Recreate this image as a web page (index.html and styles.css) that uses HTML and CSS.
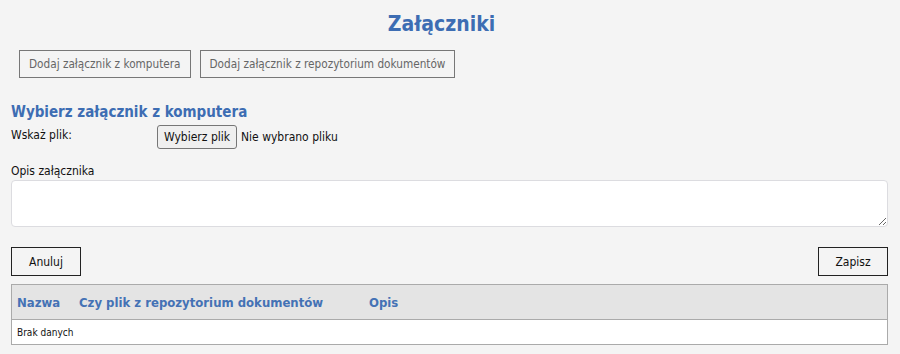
FILE: index.html
```html
<!DOCTYPE html>
<html lang="pl">
<head>
  <meta charset="UTF-8">
  <title>Załączniki</title>
  <link rel="stylesheet" href="styles.css">
</head>
<body>

  <h1 class="page-title">Załączniki</h1>

  <div class="tabs">
    <button class="tab-btn">Dodaj załącznik z komputera</button>
    <button class="tab-btn">Dodaj załącznik z repozytorium dokumentów</button>
  </div>

  <h2 class="section-title">Wybierz załącznik z komputera</h2>

  <div class="file-row">
    <label class="file-label">Wskaż plik:</label>
    <div class="file-input">
      <button class="file-btn">Wybierz plik</button>
      <span class="file-name">Nie wybrano pliku</span>
    </div>
  </div>

  <div class="desc-label">Opis załącznika</div>
  <textarea class="desc-input"></textarea>

  <div class="actions">
    <button class="action-btn">Anuluj</button>
    <button class="action-btn">Zapisz</button>
  </div>

  <table class="grid">
    <thead>
      <tr>
        <th class="col-name">Nazwa</th>
        <th class="col-repo">Czy plik z repozytorium dokumentów</th>
        <th class="col-desc">Opis</th>
      </tr>
    </thead>
    <tbody>
      <tr>
        <td colspan="3" class="empty">Brak danych</td>
      </tr>
    </tbody>
  </table>

</body>
</html>
```

FILE: styles.css
```css
body {
  margin: 0;
  padding: 0 12px 0 11px;
  background: #f4f4f4;
  font-family: 'DejaVu Sans Condensed', 'DejaVu Sans', sans-serif;
  font-size: 12px;
  color: #111;
}

.page-title {
  margin: 0;
  padding: 11px 16px 0 0;
  height: 50px;
  box-sizing: border-box;
  text-align: center;
  font-size: 21px;
  line-height: 26px;
  color: #3d6db3;
}

.tabs {
  display: flex;
  gap: 9px;
  margin-left: 8px;
}

.tab-btn {
  font-family: inherit;
  font-size: 11.7px;
  color: #666;
  background: #f4f4f4;
  border: 1px solid #777;
  height: 28px;
  padding: 0 9px;
}

.section-title {
  margin: 24px 0 0;
  font-size: 15px;
  color: #3d6db3;
  line-height: 20px;
}

.file-row {
  display: flex;
  margin-top: 3px;
}

.file-label {
  width: 146px;
  padding-top: 3px;
}

.file-input {
  display: flex;
  align-items: center;
  gap: 4px;
}

.file-btn {
  font-family: inherit;
  font-size: 12px;
  color: #111;
  background: #efefef;
  border: 1px solid #767676;
  border-radius: 3px;
  height: 24px;
  padding: 0 6px;
}

.desc-label {
  margin-top: 14px;
  line-height: 16px;
}

.desc-input {
  display: block;
  box-sizing: border-box;
  width: 100%;
  height: 47px;
  margin-top: 1px;
  border: 1px solid #dcdce0;
  border-radius: 4px;
  background: #fff;
}

.actions {
  display: flex;
  justify-content: space-between;
  margin-top: 20px;
}

.action-btn {
  font-family: inherit;
  font-size: 12px;
  color: #111;
  background: #f4f4f4;
  border: 1px solid #222;
  width: 70px;
  height: 29px;
}

.grid {
  width: 100%;
  margin-top: 8px;
  border-collapse: collapse;
  border: 1px solid #aaa;
}

.grid th {
  background: #e4e4e4;
  color: #4472b5;
  font-size: 13px;
  text-align: left;
  height: 34px;
  padding: 0 0 0 5px;
  border-bottom: 1px solid #aaa;
}

.col-name {
  width: 57px;
}

.col-repo {
  width: 285px;
}

.grid td {
  background: #fff;
  height: 24px;
  padding: 0 5px;
  font-size: 10px;
}
```
